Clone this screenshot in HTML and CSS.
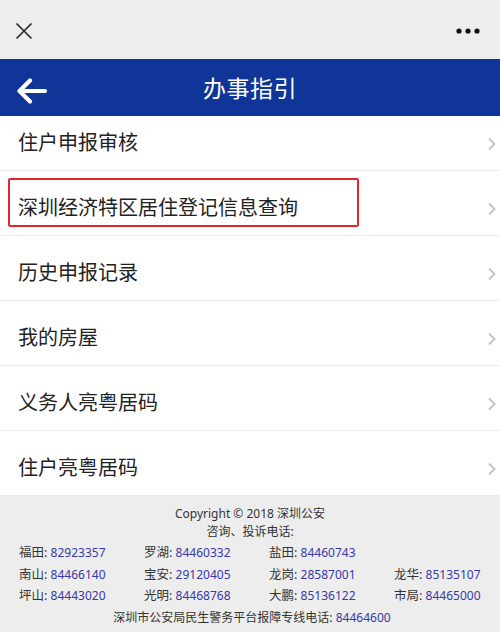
FILE: index.html
```html
<!DOCTYPE html>
<html lang="zh-CN">
<head>
<meta charset="utf-8">
<title>办事指引</title>
<link rel="stylesheet" href="styles.css">
</head>
<body>
<div class="page">
  <div class="topbar">
    <svg class="close" width="18" height="18" viewBox="0 0 18 18"><path d="M1.5 1.5L16.5 16.5M16.5 1.5L1.5 16.5" stroke="#2b2b2b" stroke-width="1.7" fill="none"/></svg>
    <svg class="more" width="26" height="8" viewBox="0 0 26 8"><circle cx="4" cy="4" r="2.6" fill="#111"/><circle cx="13" cy="4" r="2.6" fill="#111"/><circle cx="22" cy="4" r="2.6" fill="#111"/></svg>
  </div>
  <div class="header">
    <svg class="back" width="32" height="26" viewBox="0 0 32 26"><path d="M29 13H4M14 2.5L3.5 13L14 23.5" stroke="#fff" stroke-width="4.2" stroke-linecap="round" stroke-linejoin="round" fill="none"/></svg>
    <div class="title">办事指引</div>
  </div>
  <div class="list">
    <div class="row first"><span class="label">住户申报审核</span><svg class="chev" width="10" height="14" viewBox="0 0 10 14"><path d="M2 1.5L7.5 7L2 12.5" stroke="#c4c4c4" stroke-width="1.9" fill="none"/></svg></div>
    <div class="row marked"><span class="label">深圳经济特区居住登记信息查询</span><svg class="chev" width="10" height="14" viewBox="0 0 10 14"><path d="M2 1.5L7.5 7L2 12.5" stroke="#c4c4c4" stroke-width="1.9" fill="none"/></svg><div class="redbox"></div></div>
    <div class="row"><span class="label">历史申报记录</span><svg class="chev" width="10" height="14" viewBox="0 0 10 14"><path d="M2 1.5L7.5 7L2 12.5" stroke="#c4c4c4" stroke-width="1.9" fill="none"/></svg></div>
    <div class="row"><span class="label">我的房屋</span><svg class="chev" width="10" height="14" viewBox="0 0 10 14"><path d="M2 1.5L7.5 7L2 12.5" stroke="#c4c4c4" stroke-width="1.9" fill="none"/></svg></div>
    <div class="row"><span class="label">义务人亮粤居码</span><svg class="chev" width="10" height="14" viewBox="0 0 10 14"><path d="M2 1.5L7.5 7L2 12.5" stroke="#c4c4c4" stroke-width="1.9" fill="none"/></svg></div>
    <div class="row"><span class="label">住户亮粤居码</span><svg class="chev" width="10" height="14" viewBox="0 0 10 14"><path d="M2 1.5L7.5 7L2 12.5" stroke="#c4c4c4" stroke-width="1.9" fill="none"/></svg></div>
  </div>
  <div class="footer">
    <div class="center line1">Copyright © 2018 深圳公安</div>
    <div class="center line2">咨询、投诉电话:</div>
    <div class="grid">
      <div>福田: <span class="num">82923357</span></div>
      <div>罗湖: <span class="num">84460332</span></div>
      <div>盐田: <span class="num">84460743</span></div>
      <div></div>
      <div>南山: <span class="num">84466140</span></div>
      <div>宝安: <span class="num">29120405</span></div>
      <div>龙岗: <span class="num">28587001</span></div>
      <div>龙华: <span class="num">85135107</span></div>
      <div>坪山: <span class="num">84443020</span></div>
      <div>光明: <span class="num">84468768</span></div>
      <div>大鹏: <span class="num">85136122</span></div>
      <div>市局: <span class="num">84465000</span></div>
    </div>
    <div class="center line3">深圳市公安局民生警务平台报障专线电话: <span class="num">84464600</span></div>
  </div>
</div>
</body>
</html>
```

FILE: styles.css
```css
html, body {
  margin: 0;
  padding: 0;
}
body {
  width: 500px;
  height: 632px;
  overflow: hidden;
  background: #ffffff;
  font-family: "Noto Sans", "Noto Sans CJK SC", sans-serif;
}
.page {
  display: flex;
  flex-direction: column;
  height: 632px;
}
.topbar {
  height: 59px;
  background: #ededed;
  display: flex;
  align-items: center;
  justify-content: space-between;
  padding: 0 19px 0 15px;
  box-sizing: border-box;
}
.close,
.more {
  display: block;
  margin-top: 2px;
}
.header {
  height: 57px;
  background: #0f3599;
  position: relative;
  display: flex;
  align-items: center;
  justify-content: center;
}
.back {
  position: absolute;
  left: 16px;
  top: 19px;
}
.title {
  color: #ffffff;
  font-size: 23px;
  letter-spacing: 0.5px;
  line-height: 1;
  font-family: "Noto Sans CJK SC", sans-serif;
}
.list {
  display: flex;
  flex-direction: column;
}
.row {
  box-sizing: border-box;
  height: 65px;
  border-bottom: 1px solid #ececec;
  display: flex;
  align-items: flex-end;
  justify-content: space-between;
  padding: 0 3px 14px 18px;
  position: relative;
}
.row.first {
  height: 55px;
}
.label {
  font-size: 20px;
  color: #222222;
  line-height: 28px;
  font-family: "Noto Sans CJK SC", sans-serif;
}
.chev {
  display: block;
  margin-bottom: 5px;
}
.redbox {
  position: absolute;
  left: 8px;
  top: 7px;
  width: 351px;
  height: 49px;
  box-sizing: border-box;
  border: 2px solid #e3262d;
  border-radius: 2px;
}
.footer {
  flex: 1;
  background: #ededed;
  font-size: 12px;
  color: #333333;
  padding-top: 9px;
}
.center {
  text-align: center;
}
.line1, .line2 {
  line-height: 18px;
}
.line2 {
  margin-bottom: 1px;
}
.grid {
  display: grid;
  grid-template-columns: repeat(4, 125px);
  padding-left: 19px;
  line-height: 21.5px;
  font-size: 12.5px;
}
.line3 {
  line-height: 21px;
  padding-left: 4px;
}
.num {
  color: #3838a8;
  font-size: 12px;
}
```
